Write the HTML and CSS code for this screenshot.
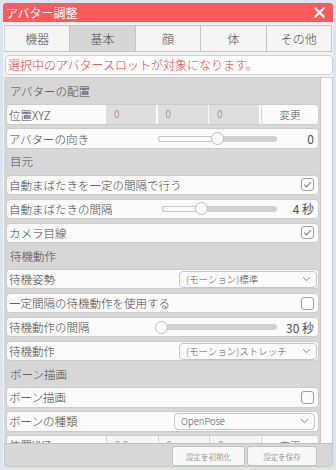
FILE: index.html
```html
<!DOCTYPE html>
<html lang="ja">
<head>
<meta charset="utf-8">
<link rel="stylesheet" href="styles.css">
</head>
<body>
<div class="window">
  <div class="titlebar">
    <span class="title">アバター調整</span>
    <svg class="close" width="11" height="11" viewBox="0 0 11 11"><path d="M1.5 1.5 L9.5 9.5 M9.5 1.5 L1.5 9.5" stroke="#fff" stroke-width="2.2" stroke-linecap="round"/></svg>
  </div>
  <div class="tabs">
    <div class="tab">機器</div>
    <div class="tab active">基本</div>
    <div class="tab">顔</div>
    <div class="tab">体</div>
    <div class="tab">その他</div>
  </div>
  <div class="notice">選択中のアバタースロットが対象になります。</div>
  <div class="scroll">
    <div class="content">
      <div class="header">アバターの配置</div>
      <div class="row">
        <span class="label">位置XYZ</span>
        <div class="inputs"><span class="inp">0</span><span class="inp">0</span><span class="inp">0</span></div>
        <span class="btn">変更</span>
      </div>
      <div class="row">
        <span class="label">アバターの向き</span>
        <div class="slider"><div class="fill" style="width:50%"></div><div class="thumb" style="left:50%"></div></div>
        <span class="val">0</span>
      </div>
      <div class="header">目元</div>
      <div class="row">
        <span class="label">自動まばたきを一定の間隔で行う</span>
        <span class="check"><svg width="11" height="11" viewBox="0 0 11 11"><path d="M2.3 5.6 L4.6 7.9 L8.9 3.2" fill="none" stroke="#8a8a8a" stroke-width="1.1"/></svg></span>
      </div>
      <div class="row">
        <span class="label">自動まばたきの間隔</span>
        <div class="slider narrow"><div class="fill" style="width:34%"></div><div class="thumb" style="left:34%"></div></div>
        <span class="val">4 秒</span>
      </div>
      <div class="row">
        <span class="label">カメラ目線</span>
        <span class="check"><svg width="11" height="11" viewBox="0 0 11 11"><path d="M2.3 5.6 L4.6 7.9 L8.9 3.2" fill="none" stroke="#8a8a8a" stroke-width="1.1"/></svg></span>
      </div>
      <div class="header">待機動作</div>
      <div class="row">
        <span class="label">待機姿勢</span>
        <div class="select"><span>(モーション)標準</span><svg width="9" height="6" viewBox="0 0 9 6"><path d="M1 1.2 L4.5 4.6 L8 1.2" fill="none" stroke="#888" stroke-width="1"/></svg></div>
      </div>
      <div class="row">
        <span class="label">一定間隔の待機動作を使用する</span>
        <span class="check"></span>
      </div>
      <div class="row">
        <span class="label">待機動作の間隔</span>
        <div class="slider"><div class="fill" style="width:3%"></div><div class="thumb" style="left:3%"></div></div>
        <span class="val">30 秒</span>
      </div>
      <div class="row">
        <span class="label">待機動作</span>
        <div class="select"><span>(モーション)ストレッチ</span><svg width="9" height="6" viewBox="0 0 9 6"><path d="M1 1.2 L4.5 4.6 L8 1.2" fill="none" stroke="#888" stroke-width="1"/></svg></div>
      </div>
      <div class="header">ボーン描画</div>
      <div class="row">
        <span class="label">ボーン描画</span>
        <span class="check"></span>
      </div>
      <div class="row">
        <span class="label">ボーンの種類</span>
        <div class="select wide"><span>OpenPose</span><svg width="9" height="6" viewBox="0 0 9 6"><path d="M1 1.2 L4.5 4.6 L8 1.2" fill="none" stroke="#888" stroke-width="1"/></svg></div>
      </div>
      <div class="row">
        <span class="label">位置XYZ</span>
        <div class="inputs white"><span class="inp">0.0</span><span class="inp">0</span><span class="inp">0</span></div>
        <span class="btn">変更</span>
      </div>
    </div>
    <div class="scrollbar"></div>
  </div>
  <div class="footer">
    <span class="fbtn">設定を初期化</span>
    <span class="fbtn">設定を保存</span>
  </div>
</div>
</body>
</html>
```

FILE: styles.css
```css
* { box-sizing: border-box; }
body {
  margin: 0;
  background: #dde4ed;
  font-family: "Noto Sans CJK JP", "Noto Sans", sans-serif;
  font-weight: 300;
  color: #444;
}
.window {
  margin: 3px 0 0 3px;
  width: 330px;
  height: 464px;
  display: flex;
  flex-direction: column;
  background: #f2f2f2;
  border-radius: 3px 3px 4px 4px;
  overflow: hidden;
}
.titlebar {
  height: 19px;
  flex: none;
  background: #fd5b5b;
  color: #fff;
  display: flex;
  align-items: center;
  justify-content: space-between;
  padding: 0 8px 0 3px;
  font-size: 12px;
  font-weight: 400;
  line-height: 19px;
}
.tabs {
  display: flex;
  height: 27px;
  flex: none;
  margin: 3px 1px 0 1px;
}
.tab {
  flex: 1;
  display: flex;
  align-items: center;
  justify-content: center;
  font-size: 12px;
  color: #4a4a4a;
  background: #f5f5f5;
  border: 1px solid #c4c4c4;
  border-left: none;
}
.tab:first-child { border-left: 1px solid #d8d8d8; }
.tab.active { background: #d6d6d6; }
.notice {
  flex: none;
  height: 20px;
  margin: 3px 0 0 2px;
  background: #fdfdfd;
  border: 1px solid #d0d0d0;
  border-radius: 4px;
  color: #f0393c;
  font-size: 12px;
  line-height: 18px;
  padding-left: 2px;
  white-space: nowrap;
}
.scroll {
  flex: none;
  height: 366px;
  margin: 2px 0 0 1px;
  background: #d7d7d7;
  display: flex;
  border-top: 1px solid #cfcfcf;
}
.content {
  flex: 1;
  overflow: hidden;
  padding: 4px 1px 0 2px;
  display: flex;
  flex-direction: column;
  gap: 3.5px;
}
.scrollbar {
  flex: none;
  width: 13px;
  background: #fbfbfb;
  border-left: 1px solid #c8c8c8;
  border-right: 1px solid #c8c8c8;
}
.header {
  flex: none;
  height: 18.8px;
  line-height: 19px;
  font-size: 11.5px;
  color: #4a4a4a;
  padding-left: 4px;
}
.row {
  flex: none;
  height: 20.5px;
  display: flex;
  align-items: center;
  background: #fbfbfb;
  border: 1px solid #cbcbcb;
  border-radius: 4px;
  padding-left: 2px;
  font-size: 11.5px;
  overflow: hidden;
}
.label {
  flex: 1;
  white-space: nowrap;
  color: #444;
}
.inputs {
  display: flex;
  gap: 1.5px;
  height: 100%;
  background: #fbfbfb;
}
.inp {
  width: 50px;
  height: 100%;
  background: #dedede;
  color: #777;
  font-size: 10px;
  line-height: 18px;
  padding-left: 8px;
}
.inputs.white .inp { background: #f6f6f6; border-left: 1px solid #d0d0d0; }
.btn {
  width: 57px;
  height: 100%;
  margin-left: 2px;
  display: flex;
  align-items: center;
  justify-content: center;
  border-left: 1px solid #d0d0d0;
  border-radius: 4px;
  background: #fbfbfb;
  font-size: 10.5px;
  color: #555;
}
.slider {
  position: relative;
  width: 119px;
  height: 6px;
  background: #d0d0d0;
  border-radius: 3px;
}
.slider.narrow { width: 115px; }
.fill {
  height: 100%;
  background: #fcfcfc;
  border: 1px solid #c6c6c6;
  border-right: none;
  border-radius: 3px 0 0 3px;
}
.thumb {
  position: absolute;
  top: 50%;
  width: 13px;
  height: 13px;
  margin: -6.5px 0 0 -6.5px;
  border-radius: 50%;
  background: #fcfcfc;
  border: 1px solid #bcbcbc;
}
.val {
  width: 41px;
  text-align: right;
  padding-right: 4px;
  font-size: 12px;
  font-weight: 400;
  color: #505050;
}
.check {
  width: 13px;
  height: 13px;
  margin-right: 4px;
  border: 1px solid #9e9e9e;
  border-radius: 3px;
  background: #fcfcfc;
  display: flex;
  align-items: center;
  justify-content: center;
}
.select {
  width: 138px;
  height: 17px;
  margin-right: 1px;
  display: flex;
  align-items: center;
  justify-content: space-between;
  padding: 0 5px 0 6px;
  border: 1px solid #c4c4c4;
  border-radius: 4px;
  background: #fbfbfb;
  font-size: 9.5px;
  color: #555;
}
.select.wide { width: 141px; margin-right: 3px; }
.footer {
  flex: 1;
  margin-left: 1px;
  display: flex;
  justify-content: flex-end;
  gap: 2px;
  padding: 2px 15px 0 0;
  background: #d7d7d7;
  border: 1px solid #c6c6c6;
  border-top: 1px solid #c0c0c0;
  border-radius: 0 0 4px 4px;
}
.fbtn {
  height: 20px;
  display: flex;
  align-items: center;
  justify-content: center;
  background: #f8f8f8;
  border: 1px solid #c2c2c2;
  border-radius: 3px;
  font-size: 7.5px;
  color: #666;
}
.fbtn:first-child { width: 73px; }
.fbtn:last-child { width: 70px; }
```
